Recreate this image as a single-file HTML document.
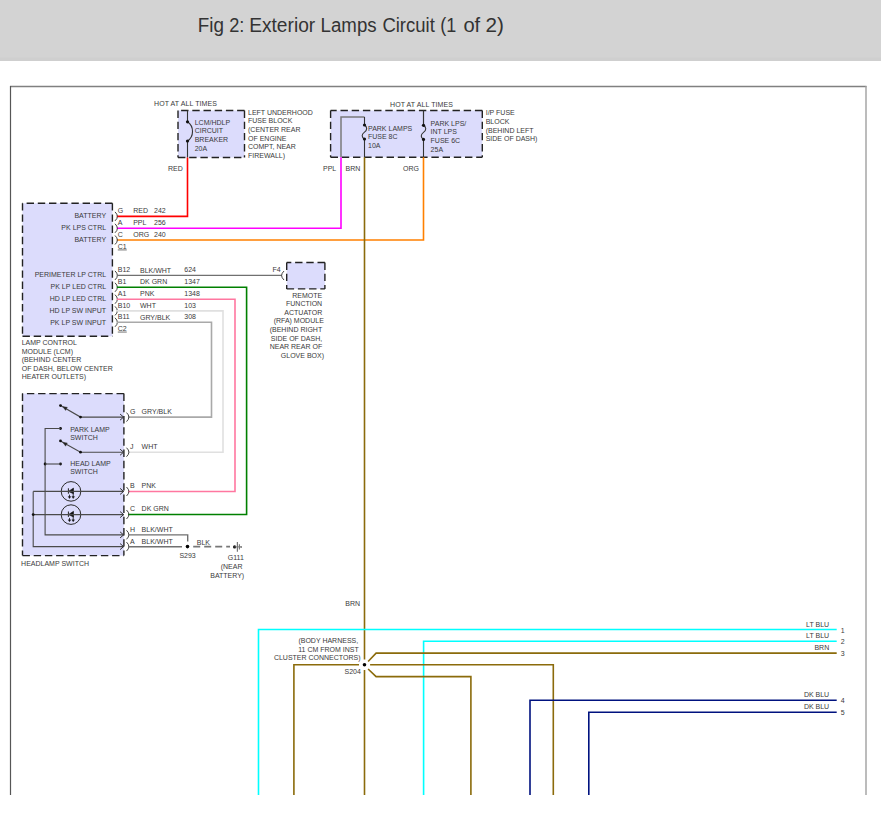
<!DOCTYPE html>
<html><head><meta charset="utf-8"><style>
html,body{margin:0;padding:0;background:#fff;width:881px;height:817px;overflow:hidden}
svg{display:block;font-family:"Liberation Sans",sans-serif}
</style></head><body>
<svg width="881" height="817" viewBox="0 0 881 817">
<rect x="0" y="0" width="881" height="61" fill="#d3d3d3"/>
<rect x="0" y="57.5" width="881" height="3.5" fill="#cfcfcf"/>
<text x="197.80" y="32" font-size="19.5" fill="#333" textLength="26.20" lengthAdjust="spacingAndGlyphs">Fig</text><text x="229.20" y="32" font-size="19.5" fill="#333" textLength="15.20" lengthAdjust="spacingAndGlyphs">2:</text><text x="249.20" y="32" font-size="19.5" fill="#333" textLength="66.00" lengthAdjust="spacingAndGlyphs">Exterior</text><text x="320.60" y="32" font-size="19.5" fill="#333" textLength="56.00" lengthAdjust="spacingAndGlyphs">Lamps</text><text x="382.40" y="32" font-size="19.5" fill="#333" textLength="52.40" lengthAdjust="spacingAndGlyphs">Circuit</text><text x="440.20" y="32" font-size="19.5" fill="#333" textLength="16.00" lengthAdjust="spacingAndGlyphs">(1</text><text x="463.40" y="32" font-size="19.5" fill="#333" textLength="16.80" lengthAdjust="spacingAndGlyphs">of</text><text x="485.60" y="32" font-size="19.5" fill="#333" textLength="18.40" lengthAdjust="spacingAndGlyphs">2)</text>
<path d="M10,86.5 H866.5" stroke="#808080" stroke-width="1.3" fill="none"/>
<path d="M10.5,86 V795" stroke="#565656" stroke-width="1.2" fill="none"/>
<path d="M866,86 V795" stroke="#a0a0a0" stroke-width="1.4" fill="none"/>
<text x="154" y="106" font-size="7" fill="#3a3a3a" text-anchor="start" textLength="63">HOT AT ALL TIMES</text>
<rect x="178" y="110.5" width="66.5" height="47.0" fill="#dcdcfc"/>
<path d="M244.5,110.5 H178 M244.5,110.5 V157.5 M178,110.5 V157.5 M178,157.5 H244.5" fill="none" stroke="#222" stroke-width="1.4" stroke-dasharray="7.4 3.8"/>
<path d="M187.5,110.5 V121.8 A11.7,11.7 0 0 1 187.5,141 V157.5" stroke="#333" stroke-width="1.1" fill="none"/>
<circle cx="187.5" cy="121.8" r="1.6" fill="#111"/>
<circle cx="187.5" cy="141" r="1.6" fill="#111"/>
<text x="194.7" y="124.6" font-size="7" fill="#3a3a3a" text-anchor="start">LCM/HDLP</text>
<text x="194.7" y="133.35" font-size="7" fill="#3a3a3a" text-anchor="start">CIRCUIT</text>
<text x="194.7" y="142.1" font-size="7" fill="#3a3a3a" text-anchor="start">BREAKER</text>
<text x="194.7" y="150.85" font-size="7" fill="#3a3a3a" text-anchor="start">20A</text>
<text x="248" y="114.7" font-size="7" fill="#3a3a3a" text-anchor="start">LEFT UNDERHOOD</text>
<text x="248" y="123.3" font-size="7" fill="#3a3a3a" text-anchor="start">FUSE BLOCK</text>
<text x="248" y="131.9" font-size="7" fill="#3a3a3a" text-anchor="start">(CENTER REAR</text>
<text x="248" y="140.5" font-size="7" fill="#3a3a3a" text-anchor="start">OF ENGINE</text>
<text x="248" y="149.1" font-size="7" fill="#3a3a3a" text-anchor="start">COMPT, NEAR</text>
<text x="248" y="157.7" font-size="7" fill="#3a3a3a" text-anchor="start">FIREWALL)</text>
<text x="168" y="171" font-size="7" fill="#3a3a3a" text-anchor="start">RED</text>
<text x="390" y="106.5" font-size="7" fill="#3a3a3a" text-anchor="start" textLength="63">HOT AT ALL TIMES</text>
<rect x="330.6" y="110.5" width="151.7" height="46.69999999999999" fill="#dcdcfc"/>
<path d="M482.3,110.5 H330.6 M482.3,110.5 V157.2 M330.6,110.5 V157.2 M330.6,157.2 H482.3" fill="none" stroke="#222" stroke-width="1.4" stroke-dasharray="7.4 3.8"/>
<path d="M341,157.2 V117 H364.5" stroke="#7a7a7a" stroke-width="1.5" fill="none"/>
<path d="M364.5,117 V125" stroke="#333" stroke-width="1.1" fill="none"/>
<path d="M364.5,125 C367.4,127 367.4,130 364.5,132.1 C361.4,134.3 361.4,137.3 364.5,139.2 V157.2" stroke="#333" stroke-width="1.1" fill="none"/>
<circle cx="364.5" cy="125" r="1.6" fill="#111"/>
<circle cx="364.5" cy="139" r="1.6" fill="#111"/>
<path d="M423.5,110.5 V125.3" stroke="#333" stroke-width="1.2" fill="none"/>
<path d="M423.5,125.3 C426.5,127.3 426.5,130.3 423.5,132.4 C420.5,134.6 420.5,137.6 423.5,139.4 V157.2" stroke="#333" stroke-width="1.1" fill="none"/>
<circle cx="423.5" cy="125.3" r="1.6" fill="#111"/>
<circle cx="423.5" cy="139.4" r="1.6" fill="#111"/>
<text x="368" y="131" font-size="7" fill="#3a3a3a" text-anchor="start">PARK LAMPS</text>
<text x="368" y="138.9" font-size="7" fill="#3a3a3a" text-anchor="start">FUSE 8C</text>
<text x="368" y="147.8" font-size="7" fill="#3a3a3a" text-anchor="start">10A</text>
<text x="430.6" y="125.6" font-size="7" fill="#3a3a3a" text-anchor="start">PARK LPS/</text>
<text x="430.6" y="133.5" font-size="7" fill="#3a3a3a" text-anchor="start">INT LPS</text>
<text x="430.6" y="142.6" font-size="7" fill="#3a3a3a" text-anchor="start">FUSE 6C</text>
<text x="430.6" y="151.5" font-size="7" fill="#3a3a3a" text-anchor="start">25A</text>
<text x="485.7" y="114.7" font-size="7" fill="#3a3a3a" text-anchor="start">I/P FUSE</text>
<text x="485.7" y="123.7" font-size="7" fill="#3a3a3a" text-anchor="start">BLOCK</text>
<text x="485.7" y="132.7" font-size="7" fill="#3a3a3a" text-anchor="start">(BEHIND LEFT</text>
<text x="485.7" y="140.8" font-size="7" fill="#3a3a3a" text-anchor="start">SIDE OF DASH)</text>
<text x="323" y="170.6" font-size="7" fill="#3a3a3a" text-anchor="start">PPL</text>
<text x="345.6" y="170.6" font-size="7" fill="#3a3a3a" text-anchor="start">BRN</text>
<text x="403" y="170.6" font-size="7" fill="#3a3a3a" text-anchor="start">ORG</text>
<path d="M187.5,157.5 V216.4 H116.8" stroke="#ff0000" stroke-width="1.6" fill="none"/>
<path d="M341,157.2 V228.3 H116.8" stroke="#ff00ff" stroke-width="1.6" fill="none"/>
<path d="M423.5,157.2 V240 H116.8" stroke="#ff8000" stroke-width="1.6" fill="none"/>
<path d="M364.5,157.2 V659.5 M364.5,670 V795" stroke="#8b6b0b" stroke-width="1.6" fill="none"/>
<rect x="22.5" y="203.2" width="89.9" height="133.10000000000002" fill="#dcdcfc"/>
<path d="M112.4,203.2 H22.5 M112.4,203.2 V336.3 M22.5,203.2 V336.3 M22.5,336.3 H112.4" fill="none" stroke="#222" stroke-width="1.4" stroke-dasharray="7.4 3.8"/>
<text x="106.1" y="217.6" font-size="7" fill="#3a3a3a" text-anchor="end">BATTERY</text>
<text x="106.1" y="229.8" font-size="7" fill="#3a3a3a" text-anchor="end">PK LPS CTRL</text>
<text x="106.1" y="241.8" font-size="7" fill="#3a3a3a" text-anchor="end">BATTERY</text>
<text x="106.1" y="276.8" font-size="7" fill="#3a3a3a" text-anchor="end">PERIMETER LP CTRL</text>
<text x="106.1" y="288.7" font-size="7" fill="#3a3a3a" text-anchor="end">PK LP LED CTRL</text>
<text x="106.1" y="300.5" font-size="7" fill="#3a3a3a" text-anchor="end">HD LP LED CTRL</text>
<text x="106.1" y="312.9" font-size="7" fill="#3a3a3a" text-anchor="end">HD LP SW INPUT</text>
<text x="106.1" y="325" font-size="7" fill="#3a3a3a" text-anchor="end">PK LP SW INPUT</text>
<path d="M115,211.9 Q119.8,216.4 115,220.9" stroke="#444" stroke-width="1" fill="none"/>
<path d="M115,223.8 Q119.8,228.3 115,232.8" stroke="#444" stroke-width="1" fill="none"/>
<path d="M115,235.5 Q119.8,240 115,244.5" stroke="#444" stroke-width="1" fill="none"/>
<path d="M115,270.9 Q119.8,275.4 115,279.9" stroke="#444" stroke-width="1" fill="none"/>
<path d="M115,282.8 Q119.8,287.3 115,291.8" stroke="#444" stroke-width="1" fill="none"/>
<path d="M115,294.7 Q119.8,299.2 115,303.7" stroke="#444" stroke-width="1" fill="none"/>
<path d="M115,306.4 Q119.8,310.9 115,315.4" stroke="#444" stroke-width="1" fill="none"/>
<path d="M115,317.8 Q119.8,322.3 115,326.8" stroke="#444" stroke-width="1" fill="none"/>
<text x="117.8" y="212.6" font-size="7" fill="#3a3a3a" text-anchor="start">G</text>
<text x="117.8" y="224.9" font-size="7" fill="#3a3a3a" text-anchor="start">A</text>
<text x="117.8" y="236.7" font-size="7" fill="#3a3a3a" text-anchor="start">C</text>
<text x="117.8" y="271.8" font-size="7" fill="#3a3a3a" text-anchor="start">B12</text>
<text x="117.8" y="283.7" font-size="7" fill="#3a3a3a" text-anchor="start">B1</text>
<text x="117.8" y="295.6" font-size="7" fill="#3a3a3a" text-anchor="start">A1</text>
<text x="117.8" y="307.9" font-size="7" fill="#3a3a3a" text-anchor="start">B10</text>
<text x="117.8" y="318.7" font-size="7" fill="#3a3a3a" text-anchor="start">B11</text>
<text x="117.8" y="248.6" font-size="7" fill="#3a3a3a" text-anchor="start" text-decoration="underline">C1</text>
<text x="117.8" y="330.7" font-size="7" fill="#3a3a3a" text-anchor="start" text-decoration="underline">C2</text>
<text x="133.2" y="212.9" font-size="7" fill="#3a3a3a" text-anchor="start">RED</text>
<text x="154" y="212.9" font-size="7" fill="#3a3a3a" text-anchor="start">242</text>
<text x="133.2" y="225.2" font-size="7" fill="#3a3a3a" text-anchor="start">PPL</text>
<text x="154" y="225.2" font-size="7" fill="#3a3a3a" text-anchor="start">256</text>
<text x="133.2" y="236.8" font-size="7" fill="#3a3a3a" text-anchor="start">ORG</text>
<text x="154" y="236.8" font-size="7" fill="#3a3a3a" text-anchor="start">240</text>
<text x="140" y="272.7" font-size="7" fill="#3a3a3a" text-anchor="start">BLK/WHT</text>
<text x="184.3" y="271.6" font-size="7" fill="#3a3a3a" text-anchor="start">624</text>
<text x="140" y="283.8" font-size="7" fill="#3a3a3a" text-anchor="start">DK GRN</text>
<text x="184.3" y="283.8" font-size="7" fill="#3a3a3a" text-anchor="start">1347</text>
<text x="140" y="295.6" font-size="7" fill="#3a3a3a" text-anchor="start">PNK</text>
<text x="184.3" y="295.6" font-size="7" fill="#3a3a3a" text-anchor="start">1348</text>
<text x="140" y="307.9" font-size="7" fill="#3a3a3a" text-anchor="start">WHT</text>
<text x="184.3" y="307.9" font-size="7" fill="#3a3a3a" text-anchor="start">103</text>
<text x="140" y="319.6" font-size="7" fill="#3a3a3a" text-anchor="start">GRY/BLK</text>
<text x="184.3" y="318.8" font-size="7" fill="#3a3a3a" text-anchor="start">308</text>
<text x="21.7" y="344.9" font-size="7" fill="#3a3a3a" text-anchor="start">LAMP CONTROL</text>
<text x="21.7" y="353.7" font-size="7" fill="#3a3a3a" text-anchor="start">MODULE (LCM)</text>
<text x="21.7" y="361.8" font-size="7" fill="#3a3a3a" text-anchor="start">(BEHIND CENTER</text>
<text x="21.7" y="370.5" font-size="7" fill="#3a3a3a" text-anchor="start">OF DASH, BELOW CENTER</text>
<text x="21.7" y="378.8" font-size="7" fill="#3a3a3a" text-anchor="start">HEATER OUTLETS)</text>
<path d="M116.8,275.4 H282" stroke="#707070" stroke-width="1.3" fill="none"/>
<path d="M116.8,287.3 H246.6 V514.5 H128" stroke="#008000" stroke-width="1.6" fill="none"/>
<path d="M116.8,299.2 H235 V491.5 H128" stroke="#ff77a0" stroke-width="1.6" fill="none"/>
<path d="M116.8,310.9 H223 V452.2 H128" stroke="#e0e0e0" stroke-width="1.6" fill="none"/>
<path d="M116.8,322.3 H211.5 V417.1 H128" stroke="#a9a9a9" stroke-width="1.6" fill="none"/>
<rect x="286.7" y="262.5" width="38.19999999999999" height="26.399999999999977" fill="#dcdcfc"/>
<path d="M324.9,262.5 H286.7 M324.9,262.5 V288.9 M286.7,262.5 V288.9 M286.7,288.9 H324.9" fill="none" stroke="#222" stroke-width="1.4" stroke-dasharray="7.4 3.8"/>
<path d="M284,271.0 Q279.2,275.5 284,280.0" stroke="#444" stroke-width="1" fill="none"/>
<text x="272.6" y="271.7" font-size="7" fill="#3a3a3a" text-anchor="start">F4</text>
<text x="322.2" y="297.6" font-size="7" fill="#3a3a3a" text-anchor="end">REMOTE</text>
<text x="322.2" y="306" font-size="7" fill="#3a3a3a" text-anchor="end">FUNCTION</text>
<text x="322.2" y="314.5" font-size="7" fill="#3a3a3a" text-anchor="end">ACTUATOR</text>
<text x="323.8" y="322.9" font-size="7" fill="#3a3a3a" text-anchor="end">(RFA) MODULE</text>
<text x="322.2" y="331.5" font-size="7" fill="#3a3a3a" text-anchor="end">(BEHIND RIGHT</text>
<text x="322.2" y="340.8" font-size="7" fill="#3a3a3a" text-anchor="end">SIDE OF DASH,</text>
<text x="322.2" y="348.5" font-size="7" fill="#3a3a3a" text-anchor="end">NEAR REAR OF</text>
<text x="324" y="357.6" font-size="7" fill="#3a3a3a" text-anchor="end">GLOVE BOX)</text>
<rect x="22.5" y="393.6" width="101.4" height="162.0" fill="#dcdcfc"/>
<path d="M123.9,393.6 H22.5 M123.9,393.6 V555.6 M22.5,393.6 V555.6 M22.5,555.6 H123.9" fill="none" stroke="#222" stroke-width="1.4" stroke-dasharray="7.4 3.8"/>
<path d="M60.5,405.6 L80.5,417.1 H123.6" stroke="#4a4a4a" stroke-width="1.1" fill="none"/>
<circle cx="60.5" cy="405.6" r="1.4" fill="#111"/>
<circle cx="80.5" cy="417.1" r="1.4" fill="#111"/>
<path d="M120.1,414.1 L123.6,417.1 L120.1,420.1" stroke="#333" stroke-width="1" fill="none"/>
<path d="M62.6,406.5 L67.4,407.3 L65.6,410.5 z" stroke="#4a4a4a" stroke-width="0.4" fill="#222"/>
<circle cx="60.5" cy="428.5" r="1.4" fill="#111"/>
<path d="M60.5,428.5 H45.1 V534.9 H123.6" stroke="#4a4a4a" stroke-width="1.1" fill="none"/>
<path d="M120.1,531.9 L123.6,534.9 L120.1,537.9" stroke="#333" stroke-width="1" fill="none"/>
<text x="70.2" y="431.8" font-size="7" fill="#3a3a3a" text-anchor="start">PARK LAMP</text>
<text x="70.2" y="439.8" font-size="7" fill="#3a3a3a" text-anchor="start">SWITCH</text>
<path d="M60.5,440.9 L80.5,452.2 H123.6" stroke="#4a4a4a" stroke-width="1.1" fill="none"/>
<circle cx="60.5" cy="440.9" r="1.4" fill="#111"/>
<circle cx="80.5" cy="452.2" r="1.4" fill="#111"/>
<path d="M120.1,449.2 L123.6,452.2 L120.1,455.2" stroke="#333" stroke-width="1" fill="none"/>
<path d="M62.6,442.2 L67.4,443 L65.6,446.2 z" stroke="#4a4a4a" stroke-width="0.4" fill="#222"/>
<circle cx="60.5" cy="464" r="1.4" fill="#111"/>
<circle cx="45.1" cy="464" r="1.4" fill="#111"/>
<path d="M60.5,464 H45.1" stroke="#4a4a4a" stroke-width="1.1" fill="none"/>
<text x="70.2" y="466.0" font-size="7" fill="#3a3a3a" text-anchor="start">HEAD LAMP</text>
<text x="70.2" y="473.8" font-size="7" fill="#3a3a3a" text-anchor="start">SWITCH</text>
<circle cx="71" cy="491.4" r="9.8" fill="none" stroke="#2a2a2a" stroke-width="1"/>
<path d="M68.4,488.29999999999995 V493.7" stroke="#222" stroke-width="1" fill="none"/>
<path d="M68.5,491.4 L73.5,488.09999999999997 V493.79999999999995 z" stroke="#111" stroke-width="0.6" fill="#111"/>
<path d="M73.2,492.4 V497.4" stroke="#222" stroke-width="0.9" fill="none"/>
<path d="M71.9,496.59999999999997 L73.2,498.59999999999997 L74.5,496.59999999999997 z" stroke="#111" stroke-width="0.4" fill="#111"/>
<path d="M69.5,494.7 V497.4" stroke="#222" stroke-width="0.9" fill="none"/>
<path d="M68.2,496.59999999999997 L69.5,498.59999999999997 L70.8,496.59999999999997 z" stroke="#111" stroke-width="0.4" fill="#111"/>
<circle cx="71" cy="514.6" r="9.8" fill="none" stroke="#2a2a2a" stroke-width="1"/>
<path d="M68.4,511.5 V516.9" stroke="#222" stroke-width="1" fill="none"/>
<path d="M68.5,514.6 L73.5,511.3 V517.0 z" stroke="#111" stroke-width="0.6" fill="#111"/>
<path d="M73.2,515.6 V520.6" stroke="#222" stroke-width="0.9" fill="none"/>
<path d="M71.9,519.8000000000001 L73.2,521.8000000000001 L74.5,519.8000000000001 z" stroke="#111" stroke-width="0.4" fill="#111"/>
<path d="M69.5,517.9 V520.6" stroke="#222" stroke-width="0.9" fill="none"/>
<path d="M68.2,519.8000000000001 L69.5,521.8000000000001 L70.8,519.8000000000001 z" stroke="#111" stroke-width="0.4" fill="#111"/>
<path d="M33.2,491.4 H123.6" stroke="#4a4a4a" stroke-width="1.1" fill="none"/>
<path d="M120.1,488.4 L123.6,491.4 L120.1,494.4" stroke="#333" stroke-width="1" fill="none"/>
<path d="M33.2,514.6 H123.6" stroke="#4a4a4a" stroke-width="1.1" fill="none"/>
<path d="M120.1,511.6 L123.6,514.6 L120.1,517.6" stroke="#333" stroke-width="1" fill="none"/>
<path d="M33.2,491.4 V546.6 H123.6" stroke="#4a4a4a" stroke-width="1.1" fill="none"/>
<path d="M120.1,543.6 L123.6,546.6 L120.1,549.6" stroke="#333" stroke-width="1" fill="none"/>
<circle cx="33.2" cy="514.6" r="1.4" fill="#111"/>
<path d="M126.5,412.6 Q131.3,417.1 126.5,421.6" stroke="#444" stroke-width="1" fill="none"/>
<path d="M126.5,447.7 Q131.3,452.2 126.5,456.7" stroke="#444" stroke-width="1" fill="none"/>
<path d="M126.5,487.0 Q131.3,491.5 126.5,496.0" stroke="#444" stroke-width="1" fill="none"/>
<path d="M126.5,510.0 Q131.3,514.5 126.5,519.0" stroke="#444" stroke-width="1" fill="none"/>
<path d="M126.5,530.3 Q131.3,534.8 126.5,539.3" stroke="#444" stroke-width="1" fill="none"/>
<path d="M126.5,542.1 Q131.3,546.6 126.5,551.1" stroke="#444" stroke-width="1" fill="none"/>
<text x="130" y="413.8" font-size="7" fill="#3a3a3a" text-anchor="start">G</text>
<text x="141.6" y="413.8" font-size="7" fill="#3a3a3a" text-anchor="start">GRY/BLK</text>
<text x="130" y="448.5" font-size="7" fill="#3a3a3a" text-anchor="start">J</text>
<text x="141.6" y="448.5" font-size="7" fill="#3a3a3a" text-anchor="start">WHT</text>
<text x="130" y="487.7" font-size="7" fill="#3a3a3a" text-anchor="start">B</text>
<text x="141.6" y="487.7" font-size="7" fill="#3a3a3a" text-anchor="start">PNK</text>
<text x="130" y="511.1" font-size="7" fill="#3a3a3a" text-anchor="start">C</text>
<text x="141.6" y="511.1" font-size="7" fill="#3a3a3a" text-anchor="start">DK GRN</text>
<text x="130" y="531.8" font-size="7" fill="#3a3a3a" text-anchor="start">H</text>
<text x="141.6" y="531.8" font-size="7" fill="#3a3a3a" text-anchor="start">BLK/WHT</text>
<text x="130" y="543.8" font-size="7" fill="#3a3a3a" text-anchor="start">A</text>
<text x="141.6" y="543.8" font-size="7" fill="#3a3a3a" text-anchor="start">BLK/WHT</text>
<text x="21.1" y="565.9" font-size="7" fill="#3a3a3a" text-anchor="start">HEADLAMP SWITCH</text>
<path d="M128,534.9 H187.7 V541.4" stroke="#707070" stroke-width="1.4" fill="none"/>
<path d="M128,546.7 H182" stroke="#707070" stroke-width="1.4" fill="none"/>
<circle cx="187.5" cy="546.6" r="1.8" fill="#000"/>
<path d="M193.2,546.7 H230" stroke="#777" stroke-width="1.7" fill="none" stroke-dasharray="7 4"/>
<circle cx="234.6" cy="546.9" r="1.6" fill="#111"/>
<path d="M237.4,542.1 V551.7" stroke="#777" stroke-width="1.2" fill="none"/>
<path d="M239.4,544.2 V549.6" stroke="#777" stroke-width="1.2" fill="none"/>
<path d="M241.2,546 V548" stroke="#777" stroke-width="1.2" fill="none"/>
<path d="M234.6,546.9 H241.2" stroke="#777" stroke-width="1" fill="none"/>
<text x="196.8" y="544.6" font-size="7" fill="#3a3a3a" text-anchor="start">BLK</text>
<text x="179.4" y="558.1" font-size="7" fill="#3a3a3a" text-anchor="start">S293</text>
<text x="243.8" y="560.4" font-size="7" fill="#3a3a3a" text-anchor="end">G111</text>
<text x="242.5" y="568.9" font-size="7" fill="#3a3a3a" text-anchor="end">(NEAR</text>
<text x="244.2" y="577.5" font-size="7" fill="#3a3a3a" text-anchor="end">BATTERY)</text>
<text x="345.3" y="605.7" font-size="7" fill="#3a3a3a" text-anchor="start">BRN</text>
<path d="M258.5,795 V629.5 H836.7" stroke="#00ffff" stroke-width="1.6" fill="none"/>
<path d="M423.6,795 V641.2 H836.7" stroke="#00ffff" stroke-width="1.6" fill="none"/>
<path d="M368.1,661.5 L376.1,653.1 H836.7" stroke="#8b6b0b" stroke-width="1.6" fill="none"/>
<path d="M293.9,795 V664.8 H359" stroke="#8b6b0b" stroke-width="1.6" fill="none"/>
<path d="M370.1,664.8 H553.3 V795" stroke="#8b6b0b" stroke-width="1.6" fill="none"/>
<path d="M368.1,669 L376.1,676.6 H470.9 V795" stroke="#8b6b0b" stroke-width="1.6" fill="none"/>
<path d="M530,795 V700.3 H836.7" stroke="#00127f" stroke-width="1.6" fill="none"/>
<path d="M588.8,795 V712.3 H836.7" stroke="#00127f" stroke-width="1.6" fill="none"/>
<circle cx="364.5" cy="664.8" r="1.8" fill="#000"/>
<text x="358.2" y="642.6" font-size="7" fill="#3a3a3a" text-anchor="end">(BODY HARNESS,</text>
<text x="358.8" y="652.3" font-size="7" fill="#3a3a3a" text-anchor="end">11 CM FROM INST</text>
<text x="360.5" y="660.4" font-size="7" fill="#3a3a3a" text-anchor="end">CLUSTER CONNECTORS)</text>
<text x="344.5" y="673.6" font-size="7" fill="#3a3a3a" text-anchor="start">S204</text>
<text x="829.2" y="626.8" font-size="7" fill="#3a3a3a" text-anchor="end">LT BLU</text>
<text x="829.2" y="638.4" font-size="7" fill="#3a3a3a" text-anchor="end">LT BLU</text>
<text x="829.2" y="650.2" font-size="7" fill="#3a3a3a" text-anchor="end">BRN</text>
<text x="829.2" y="696.8" font-size="7" fill="#3a3a3a" text-anchor="end">DK BLU</text>
<text x="829.2" y="708.6" font-size="7" fill="#3a3a3a" text-anchor="end">DK BLU</text>
<text x="840.8" y="632.8" font-size="7" fill="#3a3a3a" text-anchor="start">1</text>
<text x="840.8" y="644" font-size="7" fill="#3a3a3a" text-anchor="start">2</text>
<text x="840.8" y="655.6" font-size="7" fill="#3a3a3a" text-anchor="start">3</text>
<text x="840.8" y="702.6" font-size="7" fill="#3a3a3a" text-anchor="start">4</text>
<text x="840.8" y="714.8" font-size="7" fill="#3a3a3a" text-anchor="start">5</text>
</svg>
</body></html>
